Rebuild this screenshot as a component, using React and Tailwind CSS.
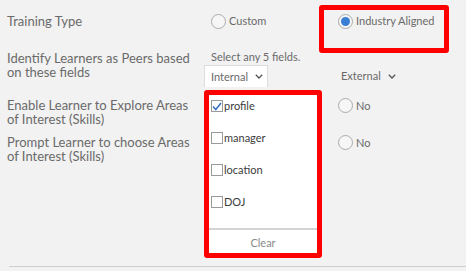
import React from "react";

function Radio({ checked, label }) {
  return (
    <div className="flex items-center">
      <div className="w-[15px] h-[15px] rounded-full border border-[#ababab] bg-[#f6f6f6] flex items-center justify-center">
        {checked && <div className="w-[9px] h-[9px] rounded-full bg-[#3a7fd6]" />}
      </div>
      <span className="ml-[3px] text-[11px]">{label}</span>
    </div>
  );
}

function Chevron() {
  return (
    <svg width="8" height="5" viewBox="0 0 8 5" className="ml-[7px]">
      <path d="M0.8 0.8 L4 4 L7.2 0.8" fill="none" stroke="#555" strokeWidth="1.3" />
    </svg>
  );
}

function Check({ checked, label }) {
  return (
    <div className="flex items-center h-[32px]">
      <div className="w-[12px] h-[12px] border border-[#9a9a9a] bg-white flex items-center justify-center">
        {checked && (
          <svg width="10" height="9" viewBox="0 0 10 9">
            <path d="M1 4.5 L3.8 7.5 L9 1" fill="none" stroke="#3a72c4" strokeWidth="1.6" />
          </svg>
        )}
      </div>
      <span className="ml-[1px] text-[11px] text-[#3c3c3c]">{label}</span>
    </div>
  );
}

export default function App() {
  return (
    <div className="relative w-[466px] h-[271px] bg-[#f2f2f2] overflow-hidden text-[#6a6a6a] font-['Lato',sans-serif] text-[13px] leading-[14px]">
      <div className="pl-[7px] pt-[14px]">
        <div className="flex items-center h-[14px]">
          <div className="w-[204px]">Training Type</div>
          <div className="w-[127px]">
            <Radio label="Custom" />
          </div>
          <Radio checked label="Industry Aligned" />
        </div>

        <div className="flex mt-[23px]">
          <div className="w-[197px]">
            Identify Learners as Peers based
            <br />
            on these fields
          </div>
          <div className="flex flex-col">
            <div className="ml-[7px] mt-[-1px] text-[11px] leading-[14px]">Select any 5 fields.</div>
            <div className="flex items-center mt-[1px] text-[11px]">
              <div className="w-[64px] h-[22px] bg-white border border-[#dcdcdc] border-b-0 flex items-center pl-[6px]">
                Internal
                <Chevron />
              </div>
              <div className="ml-[73px] flex items-center">
                External
                <Chevron />
              </div>
            </div>
          </div>
        </div>

        <div className="flex items-start mt-[11px]">
          <div className="w-[331px]">
            Enable Learner to Explore Areas
            <br />
            of Interest (Skills)
          </div>
          <Radio label="No" />
        </div>

        <div className="flex items-start mt-[9px]">
          <div className="w-[331px]">
            Prompt Learner to choose Areas
            <br />
            of Interest (Skills)
          </div>
          <Radio label="No" />
        </div>
      </div>

      <div className="absolute left-[9px] right-0 top-[266px] h-px bg-[#cfcfcf]" />

      {/* dropdown popover */}
      <div className="absolute left-[204px] top-[90px] w-[118px] h-[168px] bg-white flex flex-col">
        <div className="pl-[7px] flex flex-col">
          <Check checked label="profile" />
          <Check label="manager" />
          <Check label="location" />
          <Check label="DOJ" />
        </div>
        <div className="mt-auto mb-[5px] mx-[5px] border-t-2 border-[#d4d4d4] h-[25px] pt-[2px] flex items-center justify-center text-[11px] text-[#8a8a8a]">
          Clear
        </div>
      </div>

      {/* red annotation boxes */}
      <div className="absolute left-[319px] top-[5px] w-[130px] h-[48px] border-[5px] border-[#ff0000] rounded-[3px]" />
      <div className="absolute left-[204px] top-[90px] w-[118px] h-[168px] border-[5px] border-[#ff0000] rounded-[3px]" />
    </div>
  );
}
